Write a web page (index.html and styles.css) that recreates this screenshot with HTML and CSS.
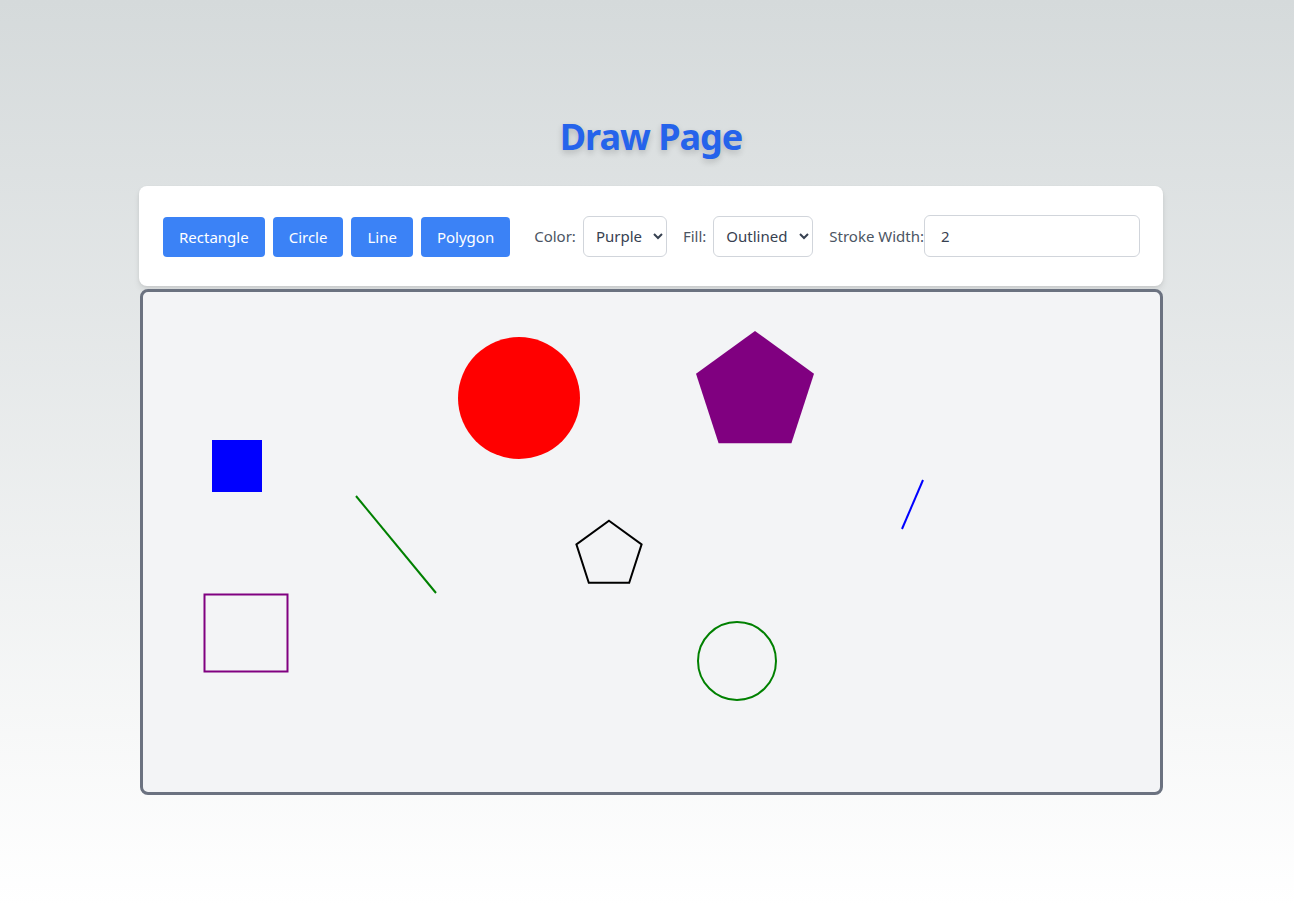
FILE: index.html
```html
<!DOCTYPE html>
<html lang="en">
<head>
<meta charset="utf-8">
<title>Draw Page</title>
<link rel="stylesheet" href="styles.css">
</head>
<body>
<main class="page">
  <h1 class="title">Draw Page</h1>
  <div class="toolbar">
    <div class="tools">
      <button class="btn">Rectangle</button>
      <button class="btn">Circle</button>
      <button class="btn">Line</button>
      <button class="btn">Polygon</button>
    </div>
    <label class="field">
      <span class="label">Color:</span>
      <select class="select select-color">
        <option>Purple</option>
      </select>
    </label>
    <label class="field">
      <span class="label">Fill:</span>
      <select class="select select-fill">
        <option>Outlined</option>
      </select>
    </label>
    <label class="field field-grow">
      <span class="label label-tight">Stroke Width:</span>
      <input class="input" type="number" value="2">
    </label>
  </div>
  <div class="canvas">
    <svg class="drawing" width="1018" height="500" viewBox="0 0 1018 500" xmlns="http://www.w3.org/2000/svg">
      <rect x="69" y="148" width="50" height="52" fill="#0000ff"/>
      <circle cx="376" cy="106" r="61" fill="#ff0000"/>
      <polygon points="612,39 671,81.8 648.4,151.2 575.6,151.2 553,81.8" fill="#800080"/>
      <line x1="213" y1="204" x2="293" y2="301" stroke="#008000" stroke-width="2"/>
      <polygon points="466,228.7 498.6,252.4 486.2,290.8 445.8,290.8 433.4,252.4" fill="none" stroke="#000000" stroke-width="2"/>
      <line x1="780" y1="188" x2="759" y2="237" stroke="#0000ff" stroke-width="2"/>
      <rect x="61.5" y="302.5" width="83" height="77" fill="none" stroke="#800080" stroke-width="2"/>
      <circle cx="594" cy="369" r="39" fill="none" stroke="#008000" stroke-width="2"/>
    </svg>
  </div>
</main>
</body>
</html>
```
FILE: styles.css
```css
* { box-sizing: border-box; }
html, body { margin: 0; padding: 0; }
body {
  min-height: 906px;
  padding-left: 8px;
  background: linear-gradient(to bottom, #d5dadb 0%, #ffffff 100%);
  font-family: "Noto Sans", "Open Sans", sans-serif;
  color: #374151;
}
.page {
  width: 1024px;
  margin: 0 auto;
  padding-top: 117px;
}
.title {
  margin: 0 0 29px;
  text-align: center;
  font-size: 36px;
  line-height: 40px;
  font-weight: 700;
  letter-spacing: -1px;
  color: #2563eb;
  text-shadow: 0 3px 6px rgba(0, 0, 0, 0.18);
}
.toolbar {
  height: 100px;
  background: #ffffff;
  border-radius: 8px;
  box-shadow: 0 4px 6px rgba(0, 0, 0, 0.08), 0 1px 3px rgba(0, 0, 0, 0.06);
  padding: 0 23px 0 24px;
  display: flex;
  align-items: center;
  margin-bottom: 3px;
}
.tools {
  display: flex;
  gap: 8px;
  margin-right: 24px;
  margin-top: 2px;
}
.btn {
  height: 40px;
  padding: 0 16px;
  border: none;
  border-radius: 4px;
  background: #3b82f6;
  color: #ffffff;
  font-family: inherit;
  font-size: 15px;
  cursor: pointer;
}
.field {
  display: flex;
  align-items: center;
  margin-right: 16px;
}
.field-grow { flex: 1; min-width: 0; margin-right: 0; }
.label {
  font-size: 15px;
  color: #4b5563;
  margin-right: 7px;
  white-space: nowrap;
}
.label-tight { margin-right: 0; }
.select {
  height: 41px;
  border: 1px solid #d1d5db;
  border-radius: 6px;
  background: #ffffff;
  color: #374151;
  font-family: inherit;
  font-size: 15px;
  padding: 0 4px 0 8px;
}
.select-color { width: 84px; }
.select-fill { width: 100px; }
.input {
  flex: 1;
  min-width: 0;
  width: 0;
  height: 42px;
  border: 1px solid #d1d5db;
  border-radius: 6px;
  padding: 0 16px;
  font-family: inherit;
  font-size: 15px;
  color: #374151;
  -moz-appearance: textfield;
}
.input::-webkit-inner-spin-button,
.input::-webkit-outer-spin-button { -webkit-appearance: none; margin: 0; }
.canvas {
  height: 506px;
  margin-left: 1px;
  width: 1023px;
  border: 3px solid #6b7280;
  border-radius: 8px;
  background: #f3f4f6;
  overflow: hidden;
}
.drawing { display: block; }
```
